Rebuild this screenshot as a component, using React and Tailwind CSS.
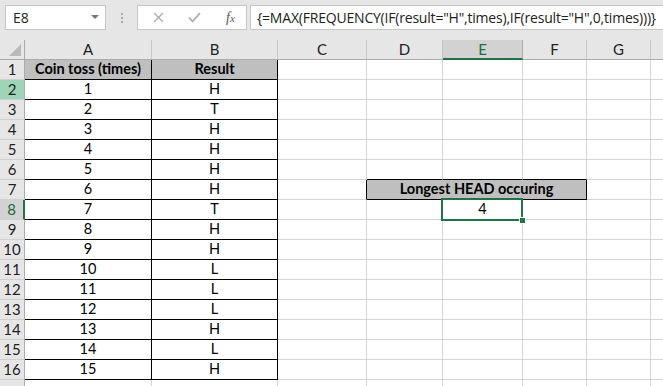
import React from "react";

const results = ["H","T","H","H","H","H","T","H","H","L","L","L","H","L","H"];
const colLetters = ["A","B","C","D","E","F","G",""];

function inT1(r, c) {
  return r >= 1 && r <= 16 && (c === 1 || c === 2);
}

function Cell({ r, c, span, children, bold, grey }) {
  const rightBlack = inT1(r, c) || (r === 7 && (c === 3 || c === 4));
  const bottomBlack = inT1(r, c) || ((r === 6 || r === 7) && c >= 4 && c <= 6);
  const cls = [
    "h-[20px] flex items-center justify-center border-r border-b text-[14.5px] leading-none text-black relative",
    rightBlack ? "border-r-black" : "border-r-[#d4d4d4]",
    bottomBlack ? "border-b-black" : "border-b-[#d4d4d4]",
    grey ? "bg-[#bfbfbf]" : "bg-white",
    bold ? "font-bold" : "",
    span ? "col-span-3" : "",
  ].join(" ");
  return <div className={cls}>{children}</div>;
}

export default function App() {
  const cells = [];
  cells.push(
    <div key="corner" className="h-[20px] bg-[#e6e6e6] border-r border-b border-r-[#ababab] border-b-[#ababab] relative">
      <svg className="absolute right-[3px] bottom-[3px]" width="12" height="12" viewBox="0 0 12 12">
        <polygon points="12,0 12,12 0,12" fill="#b9b9b9" />
      </svg>
    </div>
  );
  colLetters.forEach((l, i) => {
    const sel = l === "E";
    cells.push(
      <div
        key={"h" + i}
        className={
          sel
            ? "h-[20px] flex items-center justify-center bg-[#d2d2d2] border-r border-r-[#ababab] border-b-2 border-b-[#217346] text-[#1e6b3c] text-[15px] leading-none"
            : "h-[20px] flex items-center justify-center bg-[#e6e6e6] border-r border-r-[#c6c6c6] border-b border-b-[#ababab] text-[#222] text-[15px] leading-none"
        }
      >
        {l}
      </div>
    );
  });
  for (let r = 1; r <= 17; r++) {
    let rh = "h-[20px] flex items-center justify-center border-b border-b-[#d0d0d0] text-[15px] leading-none ";
    if (r === 2) rh += "bg-[#9fd5b7] border-r border-r-[#ababab] text-[#222]";
    else if (r === 8) rh += "bg-[#d2d2d2] border-r-2 border-r-[#217346] text-[#1e6b3c]";
    else rh += "bg-[#e6e6e6] border-r border-r-[#ababab] text-[#222]";
    cells.push(
      <div key={"r" + r} className={rh}>
        {r < 17 ? r : null}
      </div>
    );
    for (let c = 1; c <= 8; c++) {
      if (r === 7 && (c === 5 || c === 6)) continue;
      let content = null;
      let bold = false;
      let grey = false;
      let span = false;
      if (r === 1 && c === 1) { content = "Coin toss (times)"; bold = true; grey = true; }
      else if (r === 1 && c === 2) { content = "Result"; bold = true; grey = true; }
      else if (r >= 2 && r <= 16 && c === 1) content = r - 1;
      else if (r >= 2 && r <= 16 && c === 2) content = results[r - 2];
      else if (r === 7 && c === 4) { content = "Longest HEAD occuring"; bold = true; grey = true; span = true; }
      else if (r === 8 && c === 5) content = 4;
      cells.push(
        <Cell key={r + "-" + c} r={r} c={c} bold={bold} grey={grey} span={span}>
          {content}
          {r === 8 && c === 5 && (
            <>
              <div className="absolute z-10 left-[-2px] top-[-2px] right-[-1px] bottom-[-2px] border-2 border-[#217346] pointer-events-none" />
              <div className="absolute z-20 right-[-4px] bottom-[-5px] w-[7px] h-[7px] bg-[#217346] border border-white" />
            </>
          )}
        </Cell>
      );
    }
  }

  return (
    <div className="w-[663px] h-[386px] overflow-hidden bg-white" style={{ fontFamily: "Lato, 'Open Sans', sans-serif" }}>
      <div className="h-[40px] bg-[#e6e6e6] flex items-start pt-[5px] pl-[5px]" style={{ fontFamily: "'Open Sans', 'Noto Sans', sans-serif" }}>
        <div className="w-[101px] h-[25px] bg-white border border-[#c6c6c6] flex items-center justify-between pl-[7px] pr-[6px]">
          <span className="text-[14px] text-[#222]">E8</span>
          <svg width="8" height="5" viewBox="0 0 8 5"><polygon points="0,0 8,0 4,4" fill="#777" /></svg>
        </div>
        <div className="w-[31px] h-[25px] flex flex-col items-center justify-center gap-[2px]">
          <div className="w-[2px] h-[2px] bg-[#a8a8a8]" />
          <div className="w-[2px] h-[2px] bg-[#a8a8a8]" />
          <div className="w-[2px] h-[2px] bg-[#a8a8a8]" />
        </div>
        <div className="w-[110px] h-[25px] bg-white border border-[#c6c6c6] flex items-center">
          <svg className="ml-[15px]" width="11" height="11" viewBox="0 0 11 11">
            <path d="M1 1 L10 10 M10 1 L1 10" stroke="#ababab" strokeWidth="1.4" />
          </svg>
          <svg className="ml-[24px]" width="13" height="11" viewBox="0 0 13 11">
            <path d="M1 5.5 L4.5 9.5 L12 1" stroke="#ababab" strokeWidth="1.8" fill="none" />
          </svg>
          <span className="ml-[25px] text-[14px] italic text-[#555]" style={{ fontFamily: "'Liberation Serif', serif" }}>
            f<span className="text-[11px]">x</span>
          </span>
        </div>
        <div className="ml-[3px] flex-1 h-[25px] bg-white border border-[#c6c6c6] border-r-0 flex items-center pl-[6px] text-[14px] tracking-[-0.2px] text-[#222] whitespace-nowrap overflow-hidden">
          {'{=MAX(FREQUENCY(IF(result="H",times),IF(result="H",0,times)))}'}
        </div>
      </div>
      <div className="grid grid-cols-[25px_127px_126px_89px_76px_80px_64px_64px_64px] w-[715px]">
        {cells}
      </div>
    </div>
  );
}
